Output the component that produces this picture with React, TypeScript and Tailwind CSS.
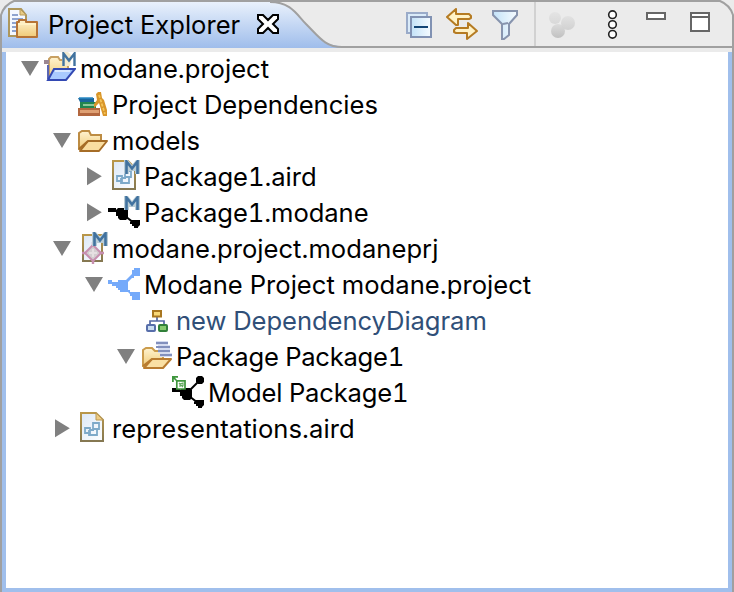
import React from "react";

function Defs() {
  return (
    <svg className="absolute h-0 w-0">
      <defs>
        <linearGradient id="tab" x1="0" y1="0" x2="0" y2="1">
          <stop offset="0" stopColor="#e9f1fc" />
          <stop offset="1" stopColor="#9fbdeb" />
        </linearGradient>
        <linearGradient id="gold" x1="0" y1="0" x2="0" y2="1">
          <stop offset="0" stopColor="#fff3d0" />
          <stop offset="1" stopColor="#f0ca76" />
        </linearGradient>
        <linearGradient id="paper" x1="0" y1="0" x2="1" y2="1">
          <stop offset="0" stopColor="#dce8f7" />
          <stop offset="1" stopColor="#fdfeff" />
        </linearGradient>
        <linearGradient id="edge" x1="0" y1="0" x2="0" y2="1">
          <stop offset="0" stopColor="#b9974a" />
          <stop offset="1" stopColor="#857852" />
        </linearGradient>
        <linearGradient id="glass" x1="0" y1="0" x2="1" y2="0">
          <stop offset="0" stopColor="#c3e2f8" />
          <stop offset="1" stopColor="#f5fbff" />
        </linearGradient>
        <linearGradient id="ball" x1="0" y1="0" x2="0" y2="1">
          <stop offset="0" stopColor="#dadada" />
          <stop offset="1" stopColor="#bcbcbc" />
        </linearGradient>
      </defs>
    </svg>
  );
}

function Icon({ children }: { children: React.ReactNode }) {
  return (
    <svg className="h-8 w-8 shrink-0" viewBox="0 0 32 32" fill="none">
      {children}
    </svg>
  );
}

function M() {
  return (
    <g>
      <path d="M16 0H20L24 5L28 0H32V14H27V11H21V14H16Z" fill="#b9ccd5" />
      <path d="M18.5 14V1.5L24 8.5L29.5 1.5V14" stroke="#41729f" strokeWidth="2.6" />
    </g>
  );
}

function OpenProject() {
  return (
    <Icon>
      <path d="M5 27V7L7 5H14L16 8H24V17" fill="url(#gold)" stroke="#c8a063" strokeWidth="2" />
      <path d="M0 8H5V12H0Z" fill="#9b8792" />
      <path d="M18 0H32L30 14H18Z" fill="#f3ead0" />
      <path d="M24 0H32V14H26L28 4Z" fill="#fff" />
      <path d="M19.5 14V1.5L25 8.5L30.5 1.5V14" stroke="#41729f" strokeWidth="2.4" />
      <path d="M4 13V27" stroke="#5965b4" strokeWidth="2" />
      <path d="M10 17H31L22 28H4Z" fill="#a9caff" stroke="#3349b3" strokeWidth="2" />
      <path d="M11 19H26" stroke="#d7e7ff" strokeWidth="2" />
    </Icon>
  );
}

function Books() {
  return (
    <Icon>
      <path d="M2 10H18V14H4Z" fill="#1a659c" />
      <path d="M3 10H17" stroke="#2a8ac5" strokeWidth="1.5" />
      <path d="M4 14H20V20H4Z" fill="#23854f" />
      <path d="M7 17H18" stroke="#8dc899" strokeWidth="2" />
      <path d="M2 20H24V28H2Z" fill="#b3673f" />
      <path d="M4 23.5H23" stroke="#dfa073" strokeWidth="3" />
      <path d="M20 6L22 4H25L26 10L28 12L31 22V28H27L24 18L23 15L18 20V16L21 12Z" fill="#d9962a" />
      <path d="M23 7L29 26" stroke="#f5c659" strokeWidth="1.7" strokeDasharray="3 1.5" />
    </Icon>
  );
}

function Folder() {
  return (
    <Icon>
      <path d="M3 26V9L6 7H13L15 11H25V17" fill="url(#gold)" stroke="#bd8c43" strokeWidth="2" />
      <path d="M12 17H31L23 27H4Z" fill="#f9dda0" stroke="#a66d27" strokeWidth="2" strokeLinejoin="round" />
      <path d="M3 25L12 17" stroke="#a66d27" strokeWidth="2" />
    </Icon>
  );
}

function Paper({ marked = false }: { marked?: boolean }) {
  return (
    <Icon>
      <path d="M5 1H20L27 8V29H5Z" fill="url(#paper)" stroke="url(#edge)" strokeWidth="2" />
      <path d="M20 1V8H27Z" fill="#efcc83" stroke="#b99957" />
      <g stroke="#7da9c9" strokeWidth="1.8">
        <path d="M9 16H14V21H9Z" />
        <path d="M17 11H23V17H17Z" />
        <path d="M13 18V23H21V17M14 18H18" />
      </g>
      {marked && <M />}
    </Icon>
  );
}

function Network({ marked = false }: { marked?: boolean }) {
  return (
    <Icon>
      <path d="M0 12H8V14H12V16H0Z" fill="#000" />
      <path d="M17 20L26 27" stroke="#000" strokeWidth="2" />
      <path d="M10 12H18L20 14V22L18 24H12L10 22V20H8V14Z" fill="#000" />
      <path d="M24 24H32V29L30 31V32H26V30H24V28H22V26Z" fill="#000" />
      {marked ? <M /> : (
        <g>
          <path d="M18 14L26 6" stroke="#000" strokeWidth="2" />
          <path d="M26 0H30L32 2V6L30 8H26L24 6V2Z" fill="#000" />
          <path d="M4.8 4.8H13V13H4.8Z" fill="#fff" stroke="#3f963d" strokeWidth="1.7" />
          <path d="M0 0H6V1.8H3L5 4L4 5L1.8 3V6H0Z" fill="#3f963d" />
          <path d="M7 7L11 11M8 11V8L11 7V10" stroke="#63aa60" strokeWidth="1.2" />
        </g>
      )}
    </Icon>
  );
}

function ProjectFile() {
  return (
    <Icon>
      <path d="M7 3H26V29H7Z" fill="url(#paper)" stroke="url(#edge)" strokeWidth="2" />
      <path d="M6 21H28M17 10V32" stroke="#c78faf" strokeWidth="2.4" />
      <path d="M17 13L25 21L17 29L9 21Z" fill="#d3ced0" stroke="#c78faf" strokeWidth="2" />
      <path d="M17 17V25M13 21H21" stroke="#e6e0e2" strokeWidth="2" />
      <M />
    </Icon>
  );
}

function BlueNetwork() {
  return (
    <Icon>
      <path
        d="M0 12H4V14H10V12H18L20 10L22 8L24 6V2H26V0H32V8H26V10H24L22 12L20 14V22H22V24H26V24H32V32H24V28H22V26L20 24H12V22H10V20H8V18H4V16H0Z"
        fill="#75aafa"
      />
    </Icon>
  );
}

function Diagram() {
  return (
    <Icon>
      <path d="M17 13V17M10 21V17H24V21" stroke="#5367a4" strokeWidth="1.7" />
      <rect x="13" y="7" width="8" height="5.5" fill="#f8d777" stroke="#a87620" strokeWidth="2" />
      <rect x="7" y="21" width="8" height="6" rx="1" fill="#c9dcf0" stroke="#576eaa" strokeWidth="2" />
      <rect x="19" y="21" width="8" height="6" rx="1" fill="#86ca6d" stroke="#318039" strokeWidth="2" />
    </Icon>
  );
}

function PackageFolder() {
  return (
    <Icon>
      <path d="M3 27V10L6 8H12L15 11H23V18" fill="url(#gold)" stroke="#cb9c4d" strokeWidth="2" />
      <path d="M16 3H28M18 7H30M18 11H30M20 15H32" stroke="#d5dcf0" strokeWidth="4" />
      <path d="M16 3H28M16 7H30M18 11H30M20 15H32" stroke="#8290bd" strokeWidth="1.8" />
      <path d="M12 19H31L23 28H4Z" fill="#fae0a4" stroke="#b97c30" strokeWidth="2" strokeLinejoin="round" />
      <path d="M3 26L12 19" stroke="#b97c30" strokeWidth="2" />
    </Icon>
  );
}

function Arrow({ state }: { state?: "open" | "closed" }) {
  return (
    <svg className="mr-1 h-8 w-5 shrink-0" viewBox="0 0 20 32" fill="#808080">
      {state === "open" && <path d="M1 9H19L10 24Z" />}
      {state === "closed" && <path d="M3 7.3V25.2L17.8 16.2Z" />}
    </svg>
  );
}

type RowProps = {
  indent: string;
  state?: "open" | "closed";
  icon: React.ReactNode;
  label: string;
  text?: string;
};

function Row({ indent, state, icon, label, text = "text-black" }: RowProps) {
  return (
    <div className={`flex h-9 items-start ${indent}`}>
      <Arrow state={state} />
      {icon}
      <span className={`ml-1 whitespace-pre leading-[34px] ${text}`}>{label}</span>
    </div>
  );
}

function Header() {
  return (
    <header className="relative flex h-12 shrink-0 items-start overflow-hidden">
      <svg className="absolute inset-0 h-12 w-[734px]" viewBox="0 0 734 48" fill="none">
        <path d="M1 48V14Q4 4 14 1H720Q730 4 733 14V48Z" fill="#ebebeb" />
        <path d="M2 48V14Q4 5 14 2H270C291 2 297 15 306 24C319 37 325 46 342 46V48Z" fill="url(#tab)" />
        <path d="M1 48V15Q4 5 14 1H720Q730 5 733 15V48" stroke="#a0a0a0" strokeWidth="2" />
        <path d="M270 2C291 2 297 15 306 24C319 37 325 47 342 47H734" stroke="#a0a0a0" strokeWidth="2" />
        <path d="M535 2V46" stroke="#d1d1d1" strokeWidth="2" />
      </svg>
      <div className="relative flex w-full items-start">
        <svg className="ml-[7px] mt-2 h-8 w-8" viewBox="0 0 32 32" fill="none">
          <path d="M2 1H14L19 7V28H2Z" fill="#f4f8ff" stroke="#ad975d" strokeWidth="2" />
          <path d="M13 1V7H19Z" fill="#e9cb84" stroke="#b89b5b" />
          <path d="M5 7H11M5 11H16M5 15H12M5 19H9M5 23H9" stroke="#8ea3cf" strokeWidth="2" />
          <path d="M12 14V12H19V14H30V29H10V14Z" fill="url(#gold)" stroke="#b77436" strokeWidth="2" strokeLinejoin="round" />
          <path d="M11 16H29" stroke="#fff1c5" strokeWidth="2" />
        </svg>
        <span className="ml-[9px] mt-2 w-[205px] whitespace-pre leading-[34px]">Project Explorer</span>
        <svg className="ml-[4px] mt-[13px] h-[22px] w-[22px]" viewBox="0 0 22 22">
          <path d="M1 2H6L11 7L16 2H21V6L16 11L21 16V20H16L11 15L6 20H1V16L6 11L1 6Z" fill="#fff" stroke="#000" strokeWidth="2" />
        </svg>
        <div className="ml-[126px] mt-2 flex">
          <svg className="h-8 w-8" viewBox="0 0 32 32" fill="none">
            <path d="M2 5H22V25H2Z" fill="#daebf9" stroke="#9aabc9" strokeWidth="2" />
            <path d="M6 9H26V29H6Z" fill="url(#glass)" stroke="#8192b3" strokeWidth="2" />
            <path d="M9 19H23" stroke="#124575" strokeWidth="2" />
          </svg>
          <svg className="ml-[9px] h-8 w-8" viewBox="0 0 32 32">
            <path d="M1 9L10 1V6H23L25 8V10L23 11H12V17H10Z" fill="#fff2c6" stroke="#b57b22" strokeWidth="2" strokeLinejoin="round" />
            <path d="M31 23L22 15V20H10L8 22V24L10 25H21V31Z" fill="#fff2c6" stroke="#b57b22" strokeWidth="2" strokeLinejoin="round" />
          </svg>
          <svg className="ml-3 h-8 w-8" viewBox="0 0 32 32">
            <path d="M3 3H27V7L19 16V27L14 31H12V16L3 7Z" fill="url(#glass)" stroke="#8794ae" strokeWidth="2" />
            <path d="M13 16L18 15" stroke="#8794ae" strokeWidth="2" />
          </svg>
          <svg className="ml-[25px] h-8 w-8" viewBox="0 0 32 32" fill="url(#ball)">
            <circle cx="8" cy="10" r="6" opacity=".4" />
            <circle cx="21" cy="15" r="7" opacity=".55" />
            <circle cx="11" cy="23" r="7" opacity=".9" />
          </svg>
          <svg className="ml-[25px] h-8 w-4" viewBox="0 0 16 32" fill="#fff" stroke="#222" strokeWidth="1.6">
            <circle cx="8.5" cy="6.7" r="3.8" />
            <circle cx="8.5" cy="16.5" r="3.8" />
            <circle cx="8.5" cy="26.3" r="3.8" />
          </svg>
          <svg className="ml-[25px] h-8 w-6" viewBox="0 0 24 32" fill="#fff" stroke="#666" strokeWidth="2">
            <path d="M2 5H20V11H2Z" />
          </svg>
          <svg className="ml-5 h-8 w-6" viewBox="0 0 24 32" fill="#fff" stroke="#666" strokeWidth="2">
            <path d="M2 5H20V23H2ZM2 9H20" />
          </svg>
        </div>
      </div>
    </header>
  );
}

export default function App() {
  return (
    <div className="flex h-[592px] w-[734px] flex-col overflow-hidden bg-[#ebebeb] font-['Inter',sans-serif] text-[25.6px] tabular-nums text-black">
      <Defs />
      <Header />
      <div className="h-1 shrink-0 border-x-2 border-[#a0a0a0] bg-[#ebebeb]" />
      <main className="flex min-h-0 flex-1 border-x-2 border-[#a0a0a0]">
        <div className="flex-1 border-x-4 border-b-4 border-[#a0bfec] bg-white">
          <Row indent="pl-[14px]" state="open" icon={<OpenProject />} label="modane.project" />
          <Row indent="pl-[46px]" icon={<Books />} label="Project Dependencies" />
          <Row indent="pl-[46px]" state="open" icon={<Folder />} label="models" />
          <Row indent="pl-[78px]" state="closed" icon={<Paper marked />} label="Package1.aird" text="text-black tracking-[-0.06px]" />
          <Row indent="pl-[78px]" state="closed" icon={<Network marked />} label="Package1.modane" text="text-black tracking-[-0.08px]" />
          <Row indent="pl-[46px]" state="open" icon={<ProjectFile />} label="modane.project.modaneprj" text="text-black tracking-[0.03px]" />
          <Row indent="pl-[78px]" state="open" icon={<BlueNetwork />} label="Modane Project modane.project" text="text-black tracking-[0.03px]" />
          <Row indent="pl-[110px]" icon={<Diagram />} label="new DependencyDiagram" text="text-[#304f78] tracking-[-0.06px]" />
          <Row indent="pl-[110px]" state="open" icon={<PackageFolder />} label="Package Package1" text="text-black tracking-[-0.26px]" />
          <Row indent="pl-[142px]" icon={<Network />} label="Model Package1" text="text-black tracking-[-0.2px]" />
          <Row indent="pl-[46px]" state="closed" icon={<Paper />} label="representations.aird" text="text-black tracking-[0.08px]" />
        </div>
      </main>
    </div>
  );
}
